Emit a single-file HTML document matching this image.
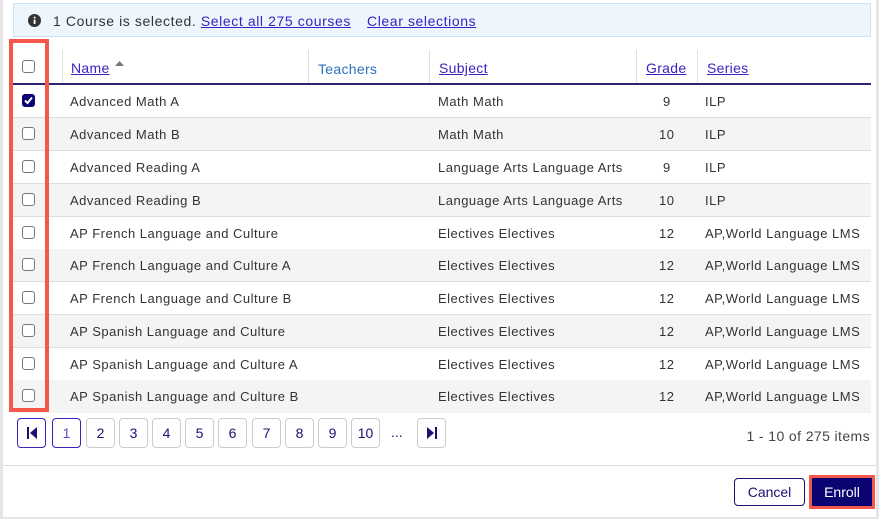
<!DOCTYPE html>
<html><head><style>
*{box-sizing:border-box;margin:0;padding:0}
body{width:879px;height:519px;background:#e6e6e9;font-family:"Liberation Sans",sans-serif;font-size:13px;color:#333;position:relative;overflow:hidden}
.dlg{position:absolute;left:3px;top:0;width:873px;height:517px;background:#fff}
.a{position:absolute}
.banner{left:13px;top:3px;width:858px;height:34px;background:#eef6fd;border:1px solid #cfe3f4}
.banner .t{position:absolute;top:9px;font-size:14px;color:#333;letter-spacing:0.6px}
.lnk{color:#3a22c0 !important;text-decoration:underline}
.sep{position:absolute;top:50px;width:1px;height:34px;background:#e0e0e0}
.navy{left:13px;top:83px;width:858px;height:2px;background:#2e2470}
.row{position:absolute;left:13px;width:858px;height:33px;border-bottom:1px solid #dedede}
.row.g{background:#f4f4f4}
.row span{position:absolute;top:9px;font-size:13px;color:#333;letter-spacing:0.5px}
.cb{position:absolute;left:9px;top:9px;width:13px;height:13px;border:1px solid #777;border-radius:3px;background:#fff}
.cb.on{background:#0b0572;border-color:#0b0572}
.red{left:9px;top:39px;width:40px;height:373px;border:4px solid #f4584a}
.pg{position:absolute;top:418px;width:29px;height:30px;border:1px solid #ccc;border-radius:4px;text-align:center;line-height:28px;font-size:14px;color:#1a1270}
.pg.act{border-color:#3a22c0;color:#5a50c8}
.h{position:absolute;top:60px;font-size:14px;letter-spacing:0.3px}
</style></head><body>
<div class="dlg"></div>
<div class="a banner">
<svg class="a" style="left:14px;top:10px" width="13" height="13" viewBox="0 0 13 13"><circle cx="6.5" cy="6.5" r="6.5" fill="#333"/><rect x="5.7" y="5.5" width="1.8" height="4.5" fill="#fff"/><circle cx="6.6" cy="3.6" r="1" fill="#fff"/></svg>
<span class="t" style="left:39px">1 Course is selected. <span class="lnk">Select all 275 courses</span></span>
<span class="t lnk" style="left:353px">Clear selections</span>
</div>
<div class="sep" style="left:62px"></div><div class="sep" style="left:308px"></div><div class="sep" style="left:429px"></div><div class="sep" style="left:636px"></div><div class="sep" style="left:697px"></div>
<div class="a" style="left:22px;top:60px;width:13px;height:13px;border:1px solid #777;border-radius:3px"></div>
<span class="h lnk" style="left:71px">Name</span>
<svg class="a" style="left:115px;top:61px" width="9" height="6"><path d="M0 5L4.5 0L9 5Z" fill="#777"/></svg>
<span class="h" style="left:318px;top:61px;color:#2a6fc0">Teachers</span>
<span class="h lnk" style="left:439px">Subject</span>
<span class="h lnk" style="left:646px">Grade</span>
<span class="h lnk" style="left:707px">Series</span>
<div class="a navy"></div>

<div class="row" style="top:85px"><div class="cb on"><svg width="11" height="11" style="position:absolute;left:0;top:0"><path d="M2 5.5L4.5 8L9 2.5" stroke="#fff" stroke-width="2" fill="none"/></svg></div><span style="left:57px">Advanced Math A</span><span style="left:425px">Math Math</span><span style="left:650px">9</span><span style="left:692px">ILP</span></div>
<div class="row g" style="top:118px"><div class="cb"></div><span style="left:57px">Advanced Math B</span><span style="left:425px">Math Math</span><span style="left:646px">10</span><span style="left:692px">ILP</span></div>
<div class="row" style="top:151px"><div class="cb"></div><span style="left:57px">Advanced Reading A</span><span style="left:425px">Language Arts Language Arts</span><span style="left:650px">9</span><span style="left:692px">ILP</span></div>
<div class="row g" style="top:184px"><div class="cb"></div><span style="left:57px">Advanced Reading B</span><span style="left:425px">Language Arts Language Arts</span><span style="left:646px">10</span><span style="left:692px">ILP</span></div>
<div class="row" style="top:217px"><div class="cb"></div><span style="left:57px">AP French Language and Culture</span><span style="left:425px">Electives Electives</span><span style="left:646px">12</span><span style="left:692px">AP,World Language LMS</span></div>
<div class="row g" style="top:249px"><div class="cb"></div><span style="left:57px">AP French Language and Culture A</span><span style="left:425px">Electives Electives</span><span style="left:646px">12</span><span style="left:692px">AP,World Language LMS</span></div>
<div class="row" style="top:282px"><div class="cb"></div><span style="left:57px">AP French Language and Culture B</span><span style="left:425px">Electives Electives</span><span style="left:646px">12</span><span style="left:692px">AP,World Language LMS</span></div>
<div class="row g" style="top:315px"><div class="cb"></div><span style="left:57px">AP Spanish Language and Culture</span><span style="left:425px">Electives Electives</span><span style="left:646px">12</span><span style="left:692px">AP,World Language LMS</span></div>
<div class="row" style="top:348px"><div class="cb"></div><span style="left:57px">AP Spanish Language and Culture A</span><span style="left:425px">Electives Electives</span><span style="left:646px">12</span><span style="left:692px">AP,World Language LMS</span></div>
<div class="row g" style="top:380px;border-bottom:none"><div class="cb"></div><span style="left:57px">AP Spanish Language and Culture B</span><span style="left:425px">Electives Electives</span><span style="left:646px">12</span><span style="left:692px">AP,World Language LMS</span></div>
<div class="a red"></div>

<div class="pg act" style="left:17px"><svg width="12" height="12" style="margin-top:8px"><rect x="1" y="0" width="2" height="12" fill="#1a1270"/><path d="M11 0L4 6L11 12Z" fill="#1a1270"/></svg></div>
<div class="pg act" style="left:52px">1</div>
<div class="pg" style="left:86px">2</div>
<div class="pg" style="left:119px">3</div>
<div class="pg" style="left:152px">4</div>
<div class="pg" style="left:185px">5</div>
<div class="pg" style="left:218px">6</div>
<div class="pg" style="left:252px">7</div>
<div class="pg" style="left:285px">8</div>
<div class="pg" style="left:318px">9</div>
<div class="pg" style="left:351px">10</div>
<span class="a" style="left:391px;top:424px;font-size:14px;color:#1a1270">...</span>
<div class="pg" style="left:417px"><svg width="12" height="12" style="margin-top:8px"><path d="M1 0L8 6L1 12Z" fill="#1a1270"/><rect x="9" y="0" width="2" height="12" fill="#1a1270"/></svg></div>
<span class="a" style="right:9px;top:428px;font-size:14px;color:#444;letter-spacing:0.4px">1 - 10 of 275 items</span>
<div class="a" style="left:3px;top:465px;width:873px;height:1px;background:#ddd"></div>
<div class="a" style="left:734px;top:478px;width:71px;height:28px;border:1px solid #1a1270;border-radius:4px;text-align:center;line-height:26px;font-size:14px;color:#1a1270">Cancel</div>
<div class="a" style="left:809px;top:475px;width:66px;height:34px;border:3px solid #f4584a"></div>
<div class="a" style="left:812px;top:478px;width:60px;height:28px;background:#0a0372;text-align:center;line-height:28px;font-size:14px;color:#fff">Enroll</div>
</body></html>
